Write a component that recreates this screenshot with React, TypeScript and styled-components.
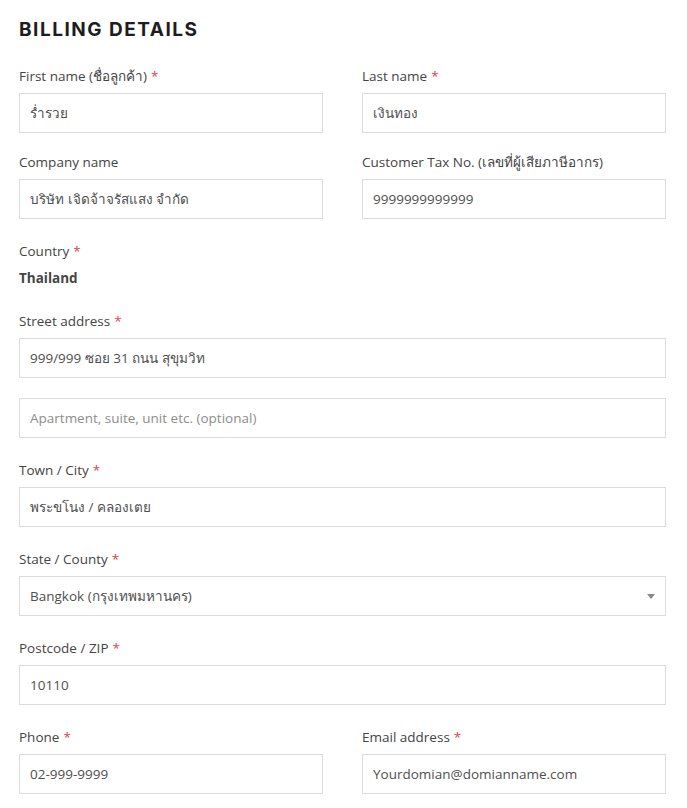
import React from 'react';
import styled, { createGlobalStyle } from 'styled-components';

const GlobalStyle = createGlobalStyle`
  body {
    margin: 0;
    background: #ffffff;
    font-family: "Open Sans", "Noto Sans", sans-serif;
  }
`;

const Page = styled.div`
  width: 647px;
  padding: 17px 0 0 19px;
`;

const Heading = styled.h3`
  margin: 0 0 23px;
  font-family: Inter, "Liberation Sans", sans-serif;
  font-size: 19px;
  font-weight: 700;
  letter-spacing: 1.5px;
  line-height: 26px;
  color: #1d1d1d;
`;

const Row = styled.div`
  display: grid;
  grid-template-columns: 304px 304px;
  column-gap: 39px;
`;

const Field = styled.div<{ $gap?: number }>`
  display: flex;
  flex-direction: column;
  margin-bottom: ${(p) => p.$gap ?? 22}px;
`;

const Label = styled.label`
  font-size: 13.5px;
  line-height: 20px;
  color: #444;
  margin-bottom: 7px;
`;

const Req = styled.span`
  color: #d9434e;
  margin-left: 4px;
`;

const Input = styled.input`
  box-sizing: border-box;
  width: 100%;
  height: 40px;
  padding: 0 10px;
  border: 1px solid #dcdcdc;
  border-radius: 0;
  font-family: "Open Sans", "Noto Sans", sans-serif;
  font-size: 13.5px;
  color: #4f4f4f;
  background: #fff;
  outline: none;
  &::placeholder {
    color: #8d8d8d;
  }
`;

const Static = styled.div`
  font-size: 13.5px;
  font-weight: 700;
  line-height: 20px;
  color: #454545;
`;

const SelectBox = styled.div`
  box-sizing: border-box;
  height: 40px;
  display: flex;
  align-items: center;
  justify-content: space-between;
  padding: 0 10px;
  border: 1px solid #dcdcdc;
  font-size: 13.5px;
  color: #4f4f4f;
`;

const Caret = styled.span`
  width: 0;
  height: 0;
  border-left: 4px solid transparent;
  border-right: 4px solid transparent;
  border-top: 5px solid #888;
`;

type FP = { label: React.ReactNode; req?: boolean; value?: string; gap?: number };

const F = ({ label, req, value, gap }: FP) => (
  <Field $gap={gap}>
    <Label>
      {label}
      {req && <Req>*</Req>}
    </Label>
    <Input defaultValue={value} />
  </Field>
);

export default function App() {
  return (
    <Page>
      <GlobalStyle />
      <Heading>BILLING DETAILS</Heading>
      <Row>
        <F label="First name (ชื่อลูกค้า)" req value="ร่ำรวย" gap={19} />
        <F label="Last name" req value="เงินทอง" gap={19} />
      </Row>
      <Row>
        <F label="Company name" value="บริษัท เจิดจ้าจรัสแสง จำกัด" />
        <F label="Customer Tax No. (เลขที่ผู้เสียภาษีอากร)" value="9999999999999" />
      </Row>
      <Field $gap={23}>
        <Label>
          Country<Req>*</Req>
        </Label>
        <Static>Thailand</Static>
      </Field>
      <Field $gap={20}>
        <Label>
          Street address<Req>*</Req>
        </Label>
        <Input defaultValue="999/999 ซอย 31 ถนน สุขุมวิท" />
      </Field>
      <Field>
        <Input placeholder="Apartment, suite, unit etc. (optional)" />
      </Field>
      <F label="Town / City" req value="พระขโนง / คลองเตย" />
      <Field>
        <Label>
          State / County<Req>*</Req>
        </Label>
        <SelectBox>
          <span>Bangkok (กรุงเทพมหานคร)</span>
          <Caret />
        </SelectBox>
      </Field>
      <F label="Postcode / ZIP" req value="10110" />
      <Row>
        <F label="Phone" req value="02-999-9999" />
        <F label="Email address" req value="Yourdomian@domianname.com" />
      </Row>
    </Page>
  );
}
